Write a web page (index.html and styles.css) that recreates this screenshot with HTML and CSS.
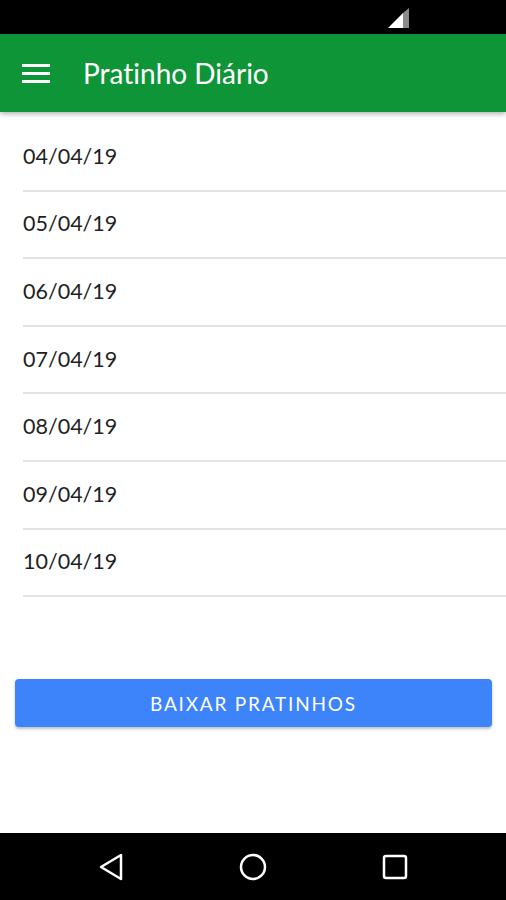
FILE: index.html
```html
<!DOCTYPE html>
<html lang="pt-BR">
  <head>
    <meta charset="UTF-8" />
    <title>Pratinho Diário</title>
    <link rel="stylesheet" href="styles.css">
  </head>
  <body>
    <div class="status-bar">
      <svg class="signal" width="22" height="20" viewBox="0 0 22 20">
        <polygon points="0,20 15,5 15,20" fill="#ffffff" />
        <polygon points="15,5 21,0 21,20 15,20" fill="#8a8a8a" />
      </svg>
    </div>
    <header class="app-bar">
      <svg class="menu-icon" width="28" height="20" viewBox="0 0 28 20">
        <rect x="0" y="0" width="28" height="3" fill="#ffffff" />
        <rect x="0" y="8" width="28" height="3" fill="#ffffff" />
        <rect x="0" y="16" width="28" height="3" fill="#ffffff" />
      </svg>
      <h1 class="app-title">Pratinho Diário</h1>
    </header>
    <ul class="date-list">
      <li class="date-item">04/04/19</li>
      <li class="date-item">05/04/19</li>
      <li class="date-item">06/04/19</li>
      <li class="date-item">07/04/19</li>
      <li class="date-item">08/04/19</li>
      <li class="date-item">09/04/19</li>
      <li class="date-item">10/04/19</li>
    </ul>
    <div class="actions">
      <button class="download-button">BAIXAR PRATINHOS</button>
    </div>
    <nav class="nav-bar">
      <svg width="26" height="28" viewBox="0 0 26 28">
        <polygon points="23,2 23,26 3,14" fill="none" stroke="#ffffff" stroke-width="2.5" stroke-linejoin="round" />
      </svg>
      <svg width="28" height="28" viewBox="0 0 28 28">
        <circle cx="14" cy="14" r="12" fill="none" stroke="#ffffff" stroke-width="2.5" />
      </svg>
      <svg width="26" height="26" viewBox="0 0 26 26">
        <rect x="2" y="2" width="22" height="22" rx="2" fill="none" stroke="#ffffff" stroke-width="2.5" />
      </svg>
    </nav>
  </body>
</html>
```

FILE: styles.css
```css
html,
body {
  margin: 0;
  padding: 0;
}

body {
  width: 506px;
  height: 900px;
  display: flex;
  flex-direction: column;
  background-color: #ffffff;
  font-family: Lato, "Open Sans", sans-serif;
  font-variant-ligatures: none;
  overflow: hidden;
}

.status-bar {
  height: 34px;
  background-color: #000000;
  display: flex;
  justify-content: flex-end;
  align-items: flex-start;
  padding-right: 96px;
  flex-shrink: 0;
}

.signal {
  margin-top: 8px;
}

.app-bar {
  height: 78px;
  background-color: #0e9538;
  display: flex;
  align-items: center;
  padding-left: 22px;
  box-shadow: 0 2px 5px rgba(0, 0, 0, 0.3);
  position: relative; /* sombra por cima da lista */
  z-index: 1;
  flex-shrink: 0;
}

.menu-icon {
  margin-top: 2px;
}

.app-title {
  margin: 0 0 0 33px;
  color: #ffffff;
  font-size: 28px;
  font-weight: 400;
}

.date-list {
  list-style: none;
  margin: 0;
  padding: 12px 0 0 23px;
}

.date-item {
  height: 67.6px;
  display: flex;
  align-items: center;
  border-bottom: 2px solid #e3e3e3;
  font-size: 21.5px;
  color: #1f1f1f;
  padding-bottom: 2px;
  box-sizing: border-box;
}

.actions {
  padding: 82px 14px 0 15px;
}

.download-button {
  width: 100%;
  height: 48px;
  border: none;
  border-radius: 4px;
  background-color: #3d83fa;
  color: #ffffff;
  font-family: Lato, "Open Sans", sans-serif;
  font-size: 19px;
  letter-spacing: 1.8px;
  box-shadow: 0 2px 3px rgba(0, 0, 0, 0.25);
}

.nav-bar {
  margin-top: auto;
  height: 67px;
  background-color: #000000;
  display: flex;
  align-items: center;
  justify-content: center;
  gap: 115px;
  flex-shrink: 0;
}
```
